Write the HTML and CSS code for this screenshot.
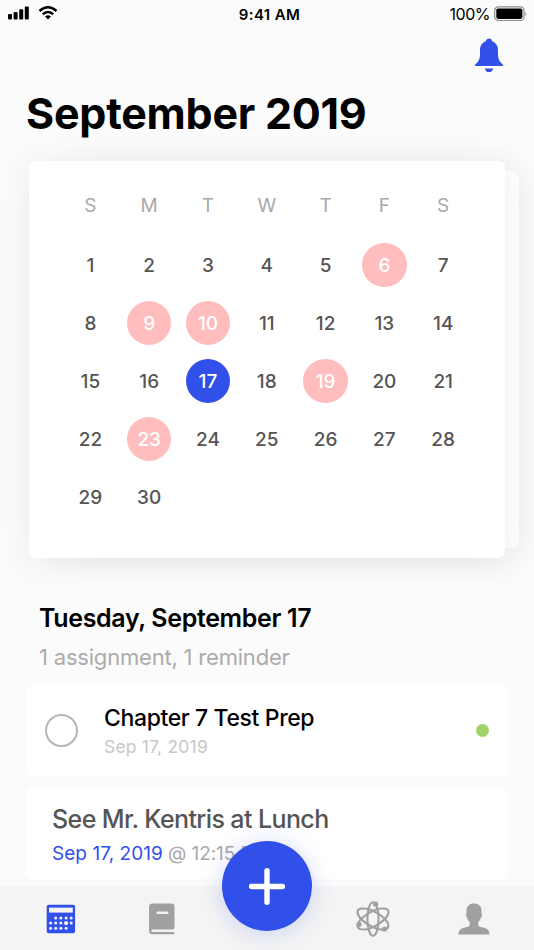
FILE: index.html
```
<!DOCTYPE html>
<html lang="en">
<head>
    <meta charset="UTF-8">
    <meta name="viewport" content="width=device-width, initial-scale=1.0">
    <title>Calendar</title>
    <link rel="stylesheet" href="styles.css">
</head>
<body>
<div class="screen">
    <!-- Status bar -->
    <div class="status-bar">
        <div class="status-left">
            <svg width="22" height="14" viewBox="0 0 22 14">
                <rect x="0" y="8" width="4" height="5.5" rx="1"/>
                <rect x="5.6" y="6" width="4" height="7.5" rx="1"/>
                <rect x="11.2" y="3.3" width="4" height="10.2" rx="1"/>
                <rect x="16.8" y="0.5" width="4" height="13" rx="1"/>
            </svg>
            <svg class="wifi" width="20" height="14" viewBox="0 0 20 14">
                <path d="M1.5 5Q10-2.4 18.5 5M4.7 8.3Q10 3.8 15.3 8.3" fill="none" stroke="#000" stroke-width="2.5"/>
                <path d="M7 10.5Q10 8 13 10.5L10 13.5Z"/>
            </svg>
        </div>
        <div class="status-time">9:41 AM</div>
        <div class="status-right">
            <span class="percent">100%</span>
            <svg width="34" height="16" viewBox="0 0 34 16">
                <rect x="0.7" y="0.9" width="29.3" height="13.6" rx="3.6" fill="none" stroke="#8c8c8c" stroke-width="1.2"/>
                <rect x="2.3" y="2.5" width="26.1" height="10.4" rx="1.8"/>
                <path d="M31.3 5.4Q33.5 7.7 31.3 10Z" fill="#8c8c8c"/>
            </svg>
        </div>
    </div>

    <!-- Header -->
    <div class="header">
        <svg class="bell" width="30" height="35" viewBox="0 0 30 35">
            <path d="M15 0.5C16.8 0.5 17.8 1.6 18 3.2C21.7 4.5 24 7.8 24 12V17C24 21.5 26 24 28.5 26.2C29.6 27.2 29 28 28.2 28H1.8C1 28 0.4 27.2 1.5 26.2C4 24 6 21.5 6 17V12C6 7.8 8.3 4.5 12 3.2C12.2 1.6 13.2 0.5 15 0.5Z"/>
            <path d="M11 30.4H19C18.8 32.8 17.2 34 15 34S11.2 32.8 11 30.4Z"/>
        </svg>
        <h1>September 2019</h1>
    </div>

    <!-- Calendar -->
    <div class="calendar-stack">
        <div class="calendar-next"></div>
        <div class="calendar">
            <div class="weekdays">
                <span>S</span><span>M</span><span>T</span><span>W</span><span>T</span><span>F</span><span>S</span>
            </div>
            <div class="days">
                <span>1</span><span>2</span><span>3</span><span>4</span><span>5</span><span class="busy">6</span><span>7</span>
                <span>8</span><span class="busy">9</span><span class="busy">10</span><span>11</span><span>12</span><span>13</span><span>14</span>
                <span>15</span><span>16</span><span class="today">17</span><span>18</span><span class="busy">19</span><span>20</span><span>21</span>
                <span>22</span><span class="busy">23</span><span>24</span><span>25</span><span>26</span><span>27</span><span>28</span>
                <span>29</span><span>30</span>
            </div>
        </div>
    </div>

    <!-- Selected day -->
    <div class="agenda">
        <h2>Tuesday, September 17</h2>
        <p class="summary">1 assignment, 1 reminder</p>

        <div class="card assignment">
            <span class="check"></span>
            <div class="assignment-text">
                <h3>Chapter 7 Test Prep</h3>
                <p>Sep 17, 2019</p>
            </div>
            <span class="dot"></span>
        </div>

        <div class="card reminder">
            <h3>See Mr. Kentris at Lunch</h3>
            <p><span class="date">Sep 17, 2019</span> @ 12:15 PM</p>
        </div>
    </div>

    <!-- Tab bar -->
    <div class="tab-bar">
        <div class="tab active">
            <svg width="30" height="30" viewBox="0 0 30 30">
                <rect x="0.7" y="0.7" width="28.4" height="28.6" rx="2" fill="#3050e9"/>
                <rect x="3" y="3.6" width="23.8" height="5" fill="#f4f4f4"/>
                <g fill="#f4f4f4">
                    <circle cx="9.7" cy="14" r="1.5"/><circle cx="14.9" cy="14" r="1.5"/><circle cx="20.1" cy="14" r="1.5"/><circle cx="25.2" cy="14" r="1.5"/>
                    <circle cx="4.6" cy="19.1" r="1.5"/><circle cx="9.7" cy="19.1" r="1.5"/><circle cx="14.9" cy="19.1" r="1.5"/><circle cx="20.1" cy="19.1" r="2.1"/><circle cx="25.2" cy="19.1" r="1.5"/>
                    <circle cx="4.6" cy="24.3" r="1.5"/><circle cx="9.7" cy="24.3" r="1.5"/><circle cx="14.9" cy="24.3" r="1.5"/><circle cx="20.1" cy="24.3" r="1.5"/>
                </g>
            </svg>
        </div>
        <div class="tab">
            <svg width="28" height="32" viewBox="0 0 28 32">
                <path d="M4.5 0.5H23.5Q26.5 0.5 26.5 3.5V24Q26.5 26.5 24 26.5H3.6V28.9H25.5Q26.5 28.9 26.5 30.1T25.5 31.3H4.5Q1 31.3 1 27.8V4Q1 0.5 4.5 0.5Z"/>
                <rect x="8.4" y="8.5" width="12" height="2.5" rx="1.2" fill="#f4f4f4"/>
            </svg>
        </div>
        <div class="tab"></div>
        <div class="tab">
            <svg width="36" height="38" viewBox="0 0 36 38">
                <g fill="none" stroke="#a0a0a0" stroke-width="2.1">
                    <ellipse cx="18" cy="19" rx="5.6" ry="16.8"/>
                    <path d="M9.5 8.5C16 8.5 30 16.5 33 23.5C34.6 28.5 31 29.8 26.5 29.5C20 29.5 6 21.5 3 14.5C1.4 9.5 4 8.2 9.5 8.5Z"/>
                    <path d="M26.5 8.5C20 8.5 6 16.5 3 23.5C1.4 28.5 5 29.8 9.5 29.5C16 29.5 30 21.5 33 14.5C34.6 9.5 32 8.2 26.5 8.5Z"/>
                </g>
                <circle cx="20.6" cy="4.2" r="2.6"/>
                <circle cx="4" cy="24.3" r="2.6"/>
                <circle cx="29.6" cy="29" r="2.6"/>
            </svg>
        </div>
        <div class="tab">
            <svg width="32" height="32" viewBox="0 0 32 32">
                <path d="M16 0.5C20.6 0.5 23.5 3.2 23.5 7.5V10.5C24.6 10.8 24.1 14 23 14.3C22.5 16.5 21.7 17.8 20.2 19.2V21.6C20.2 23.4 22 24 24.8 24.6C29 25.5 31.5 27 31.5 31.5H0.5C0.5 27 3 25.5 7.2 24.6C10 24 11.8 23.4 11.8 21.6V19.2C10.3 17.8 9.5 16.5 9 14.3C7.9 14 7.4 10.8 8.5 10.5V7.5C8.5 3.2 11.4 0.5 16 0.5Z"/>
            </svg>
        </div>
        <div class="add">
            <svg width="36" height="37" viewBox="0 0 36 37">
                <path d="M18 2.8V34.2M2.5 18.5H33.5" stroke="#fff" stroke-width="5.4" stroke-linecap="round"/>
            </svg>
        </div>
    </div>
</div>
</body>
</html>
```
FILE: styles.css
```
* {
    box-sizing: border-box;
}
body {
    margin: 0;
    font-family: Inter, "Liberation Sans", sans-serif;
    background-color: #fbfbfb;
    color: #000;
}
h1, h2, h3, p {
    margin: 0;
}
svg {
    display: block;
    flex-shrink: 0;
}
.screen {
    position: relative;
    width: 534px;
    height: 950px;
    overflow: hidden;
}

/* status bar */
.status-bar {
    display: grid;
    grid-template-columns: 1fr auto 1fr;
    align-items: center;
    height: 28px;
    padding: 0 6px 0 8px;
}
.status-left, .status-right {
    display: flex;
    align-items: center;
}
.status-left {
    gap: 8px;
    padding-bottom: 2px;
}
.status-right {
    justify-content: flex-end;
    gap: 4px;
    padding-bottom: 1px;
}
.status-time {
    padding-left: 3px;
    font-size: 15px;
    font-weight: 600;
    letter-spacing: 0.4px;
}
.percent {
    font-size: 16px;
    letter-spacing: -0.5px;
}

/* header */
.header {
    height: 133px;
    padding: 10px 30px 0 26px;
}
.bell {
    margin-left: auto;
    fill: #3050e9;
}
h1 {
    margin-top: 14px;
    font-size: 43px;
    line-height: 52px;
    font-weight: 700;
    letter-spacing: -0.25px;
    white-space: nowrap;
}

/* calendar */
.calendar-stack {
    position: relative;
    height: 397px;
    padding: 0 29px;
}
.calendar-next {
    position: absolute;
    top: 10px;
    right: 15px;
    width: 460px;
    height: 377px;
    border-radius: 6px;
    background-color: #fff;
    box-shadow: 0 4px 36px rgba(0, 0, 0, 0.07);
}
.calendar {
    position: relative;
    height: 397px;
    padding: 29px 32px 0;
    border-radius: 6px;
    background-color: #fff;
    box-shadow: 0 4px 36px rgba(0, 0, 0, 0.07);
}
.weekdays, .days {
    display: grid;
    grid-template-columns: repeat(7, 58.8px);
    justify-items: center;
    align-items: center;
}
.weekdays {
    height: 30px;
    font-size: 19px;
    color: #a9a9a9;
}
.days {
    grid-auto-rows: 58px;
    margin-top: 16px;
    font-size: 19px;
    font-weight: 500;
    color: #555;
}
.days span {
    width: 44.4px;
    height: 44.4px;
    line-height: 46px;
    border-radius: 50%;
    text-align: center;
}
.days .busy {
    background-color: #ffbdbe;
    color: #fff;
}
.days .today {
    background-color: #3050e9;
    color: #fff;
}

/* agenda */
.agenda {
    padding: 44px 26px 0;
}
.agenda h2 {
    padding-left: 13px;
    font-size: 25px;
    line-height: 32px;
    font-weight: 600;
    letter-spacing: -0.35px;
}
.summary {
    padding-left: 13px;
    margin-top: 9px;
    font-size: 22px;
    line-height: 28px;
    letter-spacing: -0.2px;
    color: #ababab;
}
.card {
    width: 482px;
    height: 91px;
    border-radius: 7px;
    background-color: #fff;
}
.assignment {
    display: flex;
    align-items: center;
    margin-top: 14px;
    padding: 0 19px;
}
.check {
    width: 33px;
    height: 33px;
    border: 2px solid #b5b5b5;
    border-radius: 50%;
}
.assignment-text {
    flex: 1;
    margin-left: 26px;
}
.assignment h3 {
    margin-top: 1px;
    font-size: 23px;
    line-height: 30px;
    font-weight: 500;
    letter-spacing: -0.38px;
}
.assignment p {
    margin-top: 1px;
    font-size: 17.5px;
    line-height: 25px;
    letter-spacing: 0.2px;
    color: #c7c7c7;
}
.dot {
    width: 13px;
    height: 13px;
    border-radius: 50%;
    background-color: #9fd468;
}
.reminder {
    margin-top: 12px;
    padding: 15px 26px 0;
}
.reminder h3 {
    font-size: 25px;
    line-height: 32px;
    font-weight: 500;
    letter-spacing: -0.6px;
    color: #555;
}
.reminder p {
    margin-top: 6px;
    font-size: 19px;
    line-height: 25px;
    letter-spacing: -0.1px;
    color: #a9a9a9;
}
.reminder .date {
    letter-spacing: 0.05px;
    color: #3050e9;
}

/* tab bar */
.tab-bar {
    position: absolute;
    left: 0;
    bottom: 0;
    display: grid;
    grid-template-columns: 110px 92px 130px 70px 132px;
    width: 534px;
    height: 64px;
    background-color: #f4f4f4;
}
.tab {
    display: flex;
    align-items: center;
    justify-content: center;
    padding-left: 11px;
    padding-top: 1px;
    fill: #a0a0a0;
}
.add {
    position: absolute;
    top: -45px;
    left: 222px;
    display: flex;
    align-items: center;
    justify-content: center;
    width: 90px;
    height: 90px;
    border-radius: 50%;
    background-color: #3050e9;
    box-shadow: 0 2px 22px rgba(48, 80, 233, 0.22);
}
```
